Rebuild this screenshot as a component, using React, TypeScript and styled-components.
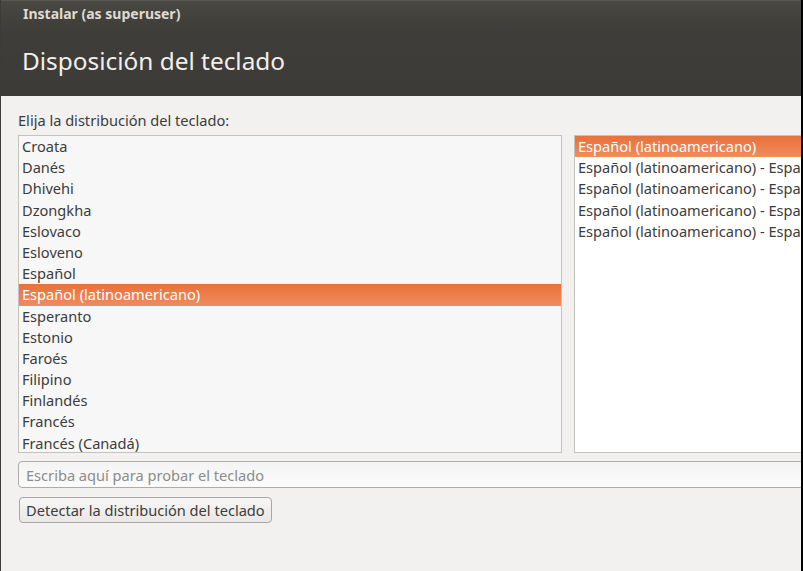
import React from "react";
import styled, { createGlobalStyle } from "styled-components";

const Global = createGlobalStyle`
  html, body { margin: 0; padding: 0; background: #000; }
  body { font-family: "Noto Sans", "Open Sans", sans-serif; }
  #root { width: 803px; height: 571px; overflow: hidden; }
`;

const Screen = styled.div`
  width: 803px;
  height: 571px;
  display: flex;
  background: #000;
`;

const Window = styled.div`
  width: 800px;
  height: 571px;
  display: flex;
  flex-direction: column;
  background: #f2f1f0;
  border-left: 1px solid #3c3b37;
  overflow: hidden;
`;

const Header = styled.header`
  height: 96px;
  flex: none;
  box-sizing: border-box;
  background: linear-gradient(#4a4843 0px, #45433e 12px, #3e3d39 30px, #3c3b37 100%);
  border-top: 1px solid #5a5852;
  padding: 4px 0 0 22px;
  display: flex;
  flex-direction: column;
`;

const AppTitle = styled.div`
  font-size: 14px;
  font-weight: 700;
  color: #dfdbd2;
  line-height: 18px;
`;

const PageTitle = styled.h1`
  margin: 22px 0 0 -1px;
  font-size: 24.4px;
  font-weight: 400;
  color: #f2efe9;
  line-height: 32px;
`;

const Content = styled.main`
  flex: 1;
  padding: 15px 0 0 17px;
  display: flex;
  flex-direction: column;
`;

const Label = styled.div`
  font-size: 14.6px;
  color: #3c3c3c;
  line-height: 18px;
  margin-bottom: 6px;
`;

const Lists = styled.div`
  display: flex;
  gap: 12px;
  height: 318px;
`;

const ListBox = styled.ul<{ $white?: boolean; $width: number }>`
  list-style: none;
  margin: 0;
  padding: 0;
  width: ${(p) => p.$width}px;
  flex: none;
  box-sizing: border-box;
  border: 1px solid #c4c2bd;
  background: ${(p) => (p.$white ? "#ffffff" : "#f7f7f7")};
  overflow: hidden;
`;

const Row = styled.li<{ $selected?: boolean }>`
  height: 21.2px;
  line-height: 21px;
  padding-left: 3px;
  font-size: 14.6px;
  white-space: nowrap;
  color: ${(p) => (p.$selected ? "#ffffff" : "#3c3c3c")};
  background: ${(p) =>
    p.$selected ? "linear-gradient(#e8713c, #f08c5c)" : "transparent"};
`;

const TestInput = styled.input`
  margin-top: 8px;
  width: 820px;
  height: 27px;
  box-sizing: border-box;
  border: 1px solid #aeaca8;
  border-radius: 4px;
  background: linear-gradient(#f4f4f4, #fbfbfb);
  padding: 0 0 0 7px;
  font-family: inherit;
  font-size: 14.6px;
  color: #3c3c3c;
  outline: none;
  &::placeholder { color: #8c8c8c; }
`;

const Button = styled.button`
  margin-top: 9px;
  align-self: flex-start;
  margin-left: 1px;
  height: 26px;
  box-sizing: border-box;
  padding: 0 6px;
  border: 1px solid #a9a7a3;
  border-radius: 4px;
  background: linear-gradient(#f7f6f5, #e9e8e6);
  font-family: inherit;
  font-size: 14.6px;
  color: #3c3c3c;
  line-height: 23px;
`;

const layouts = [
  "Croata", "Danés", "Dhivehi", "Dzongkha", "Eslovaco", "Esloveno", "Español",
  "Español (latinoamericano)", "Esperanto", "Estonio", "Faroés", "Filipino",
  "Finlandés", "Francés", "Francés (Canadá)",
];

const variants = [
  "Español (latinoamericano)",
  "Español (latinoamericano) - Español (latinoamericano, eliminar teclas muertas)",
  "Español (latinoamericano) - Español (latinoamericano, incluir tilde muerta)",
  "Español (latinoamericano) - Español (latinoamericano, teclas muertas de Sun)",
  "Español (latinoamericano) - Español (latinoamericano, Dvorak)",
];

export default function App() {
  return (
    <Screen>
      <Global />
      <Window>
        <Header>
          <AppTitle>Instalar (as superuser)</AppTitle>
          <PageTitle>Disposición del teclado</PageTitle>
        </Header>
        <Content>
          <Label>Elija la distribución del teclado:</Label>
          <Lists>
            <ListBox $width={544}>
              {layouts.map((l) => (
                <Row key={l} $selected={l === "Español (latinoamericano)"}>{l}</Row>
              ))}
            </ListBox>
            <ListBox $white $width={400}>
              {variants.map((v, i) => (
                <Row key={v} $selected={i === 0}>{v}</Row>
              ))}
            </ListBox>
          </Lists>
          <TestInput placeholder="Escriba aquí para probar el teclado" />
          <Button>Detectar la distribución del teclado</Button>
        </Content>
      </Window>
    </Screen>
  );
}
